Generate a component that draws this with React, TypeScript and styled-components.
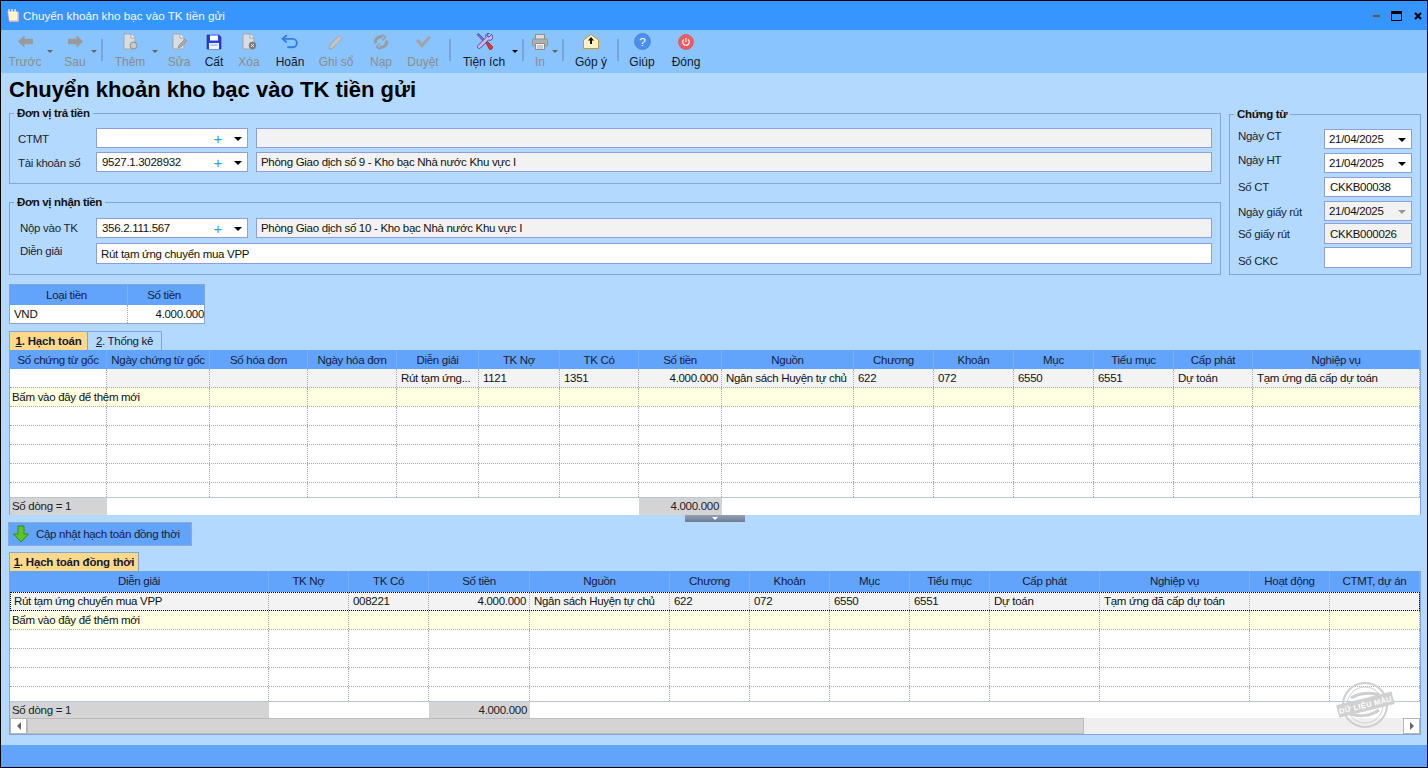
import React from "react";
import styled, { createGlobalStyle } from "styled-components";

const GlobalStyle = createGlobalStyle`
  html, body { margin: 0; padding: 0; overflow: hidden; }
  * { box-sizing: border-box; }
  body {
    font-family: "Liberation Sans", Arial, sans-serif;
    font-size: 11.5px;
    letter-spacing: -0.3px;
    color: #111;
  }
`;

const Windowed = styled.div`
  width: 1428px;
  height: 768px;
  display: flex;
  flex-direction: column;
  background: #b4d9ff;
  border: 1px solid #000;
`;

const TitleBar = styled.div`
  height: 29px;
  flex: none;
  display: flex;
  align-items: center;
  background: #3795ff;
  padding-left: 5px;
  color: #f2f8ff;
  font-size: 11.7px;
  letter-spacing: 0;
`;

const TitleText = styled.span`
  margin-left: 3px;
`;

const WindowButtons = styled.div`
  margin-left: auto;
  display: flex;
  align-items: center;
  padding-right: 5px;
`;

const WinMin = styled.div`
  width: 7px;
  height: 2px;
  background: #5a5a5a;
  margin-right: 11px;
`;

const WinMax = styled.div`
  width: 11px;
  height: 10px;
  border: 1px solid #000;
  border-top-width: 3px;
  margin-right: 12px;
`;

const Toolbar = styled.div`
  height: 43px;
  flex: none;
  display: flex;
  align-items: stretch;
  background: #8ac4ff;
  padding-left: 3px;
  letter-spacing: 0;
`;

const ToolButton = styled.div<{ $w: number; $ml?: number; $off?: boolean }>`
  width: ${(p) => p.$w}px;
  margin-left: ${(p) => p.$ml ?? 0}px;
  flex: none;
  display: flex;
  flex-direction: column;
  align-items: center;
  padding-top: 3px;
  color: ${(p) => (p.$off ? "#8c8c8c" : "#14182c")};
  white-space: nowrap;
`;

const ToolIcon = styled.div`
  height: 17px;
  display: flex;
  align-items: center;
  justify-content: center;
`;

const ToolLabel = styled.div`
  margin-top: 5px;
  line-height: 15px;
  font-size: 12px;
`;

const DropArrow = styled.div<{ $ml: number; $off?: boolean }>`
  flex: none;
  width: 0;
  height: 0;
  margin-left: ${(p) => p.$ml}px;
  margin-top: 20px;
  border-left: 3px solid transparent;
  border-right: 3px solid transparent;
  border-top: 3px solid ${(p) => (p.$off ? "#666" : "#000")};
`;

const ToolSep = styled.div<{ $ml: number }>`
  flex: none;
  width: 2px;
  height: 22px;
  margin: 9px 0 0 ${(p) => p.$ml}px;
  background: #7aa5d8;
`;

const Content = styled.div`
  flex: 1;
  min-height: 0;
  padding: 0 6px 0 8px;
  display: flex;
  flex-direction: column;
`;

const Heading = styled.h1`
  height: 40px;
  flex: none;
  margin: 0;
  padding-top: 1px;
  font-size: 22px;
  line-height: 32px;
  font-weight: bold;
  letter-spacing: 0;
  color: #000;
`;

const FormRow = styled.div`
  display: flex;
  gap: 8px;
  flex: none;
`;

const LeftForms = styled.div`
  width: 1212px;
  flex: none;
  display: flex;
  flex-direction: column;
  gap: 18px;
`;

const Group = styled.div<{ $h: number }>`
  position: relative;
  height: ${(p) => p.$h}px;
  border: 1px solid #86a5d6;
`;

const GroupTitle = styled.div`
  position: absolute;
  top: -8px;
  left: 4px;
  padding: 0 3px;
  background: #b4d9ff;
  font-weight: bold;
  font-size: 11.5px;
  line-height: 14px;
  letter-spacing: -0.35px;
`;

const FormLine = styled.div<{ $top: number; $left: number }>`
  display: flex;
  align-items: center;
  margin-top: ${(p) => p.$top}px;
  padding-left: ${(p) => p.$left}px;
`;

const FormLabel = styled.div<{ $w: number; $dy?: number }>`
  width: ${(p) => p.$w}px;
  flex: none;
  margin-top: ${(p) => (p.$dy ?? 0) * 2}px;
  color: #1a1f33;
`;

const Input = styled.div<{ $w?: number; $h: number; $off?: boolean; $pl?: number }>`
  width: ${(p) => (p.$w ? `${p.$w}px` : "auto")};
  flex: ${(p) => (p.$w ? "none" : "1")};
  height: ${(p) => p.$h}px;
  display: flex;
  align-items: center;
  padding-top: 2px;
  padding-left: ${(p) => p.$pl ?? 4}px;
  background: ${(p) => (p.$off ? "#f2f2f2" : "#fff")};
  border: 1px solid #8f9ed8;
  line-height: 1;
  white-space: nowrap;
`;

const Plus = styled.span`
  margin-left: auto;
  margin-top: -2px;
  color: #3b9bf0;
  font-size: 15px;
  line-height: 1;
`;

const ComboArrow = styled.span<{ $off?: boolean }>`
  width: 0;
  height: 0;
  margin: 0 5px 0 ${(p) => (p.$off ? "auto" : "12px")};
  border-left: 4px solid transparent;
  border-right: 4px solid transparent;
  border-top: 4px solid ${(p) => (p.$off ? "#999" : "#000")};
`;

const DateArrow = styled(ComboArrow)`
  margin-left: auto;
`;

const VoucherGroup = styled(Group)`
  width: 192px;
  flex: none;
  margin-top: 1px;
  padding: 14px 8px 0 8px;
`;

const VoucherLine = styled.div<{ $h: number; $mt: number }>`
  display: flex;
  align-items: center;
  height: ${(p) => p.$h}px;
  margin-top: ${(p) => p.$mt}px;
`;

const MoneyTable = styled.div`
  width: 196px;
  height: 40px;
  flex: none;
  margin-top: 9px;
  border: 1px solid #86a5d6;
  background: #fff;
`;

const MoneyRow = styled.div<{ $head?: boolean }>`
  display: grid;
  grid-template-columns: 118px 76px;
  height: ${(p) => (p.$head ? 20 : 18)}px;
  line-height: ${(p) => (p.$head ? 20 : 18)}px;
  background: ${(p) => (p.$head ? "#62a4fb" : "#fff")};
`;

const MoneyCell = styled.div<{ $head?: boolean; $right?: boolean }>`
  text-align: ${(p) => (p.$head ? "center" : p.$right ? "right" : "left")};
  padding: 0 ${(p) => (p.$right ? 0 : 4)}px 0 ${(p) => (p.$head ? 0 : 4)}px;
  color: ${(p) => (p.$head ? "#14203f" : "#111")};
  border-right: ${(p) => (p.$head ? "1px solid #7fb0f0" : "1px dotted #aaa")};
  &:last-child { border-right: none; }
`;

const Tabs = styled.div<{ $mt: number }>`
  display: flex;
  flex: none;
  height: 19px;
  margin-top: ${(p) => p.$mt}px;
`;

const Tab = styled.div<{ $active?: boolean; $w: number }>`
  width: ${(p) => p.$w}px;
  line-height: 18px;
  text-align: center;
  white-space: nowrap;
  font-weight: ${(p) => (p.$active ? "bold" : "normal")};
  letter-spacing: ${(p) => (p.$active ? "-0.2px" : "-0.3px")};
  background: ${(p) => (p.$active ? "#ffd98a" : "#b4d9ff")};
  border: 1px solid #86a5d6;
  border-bottom: none;
  border-left-width: ${(p) => (p.$active ? 1 : 0)}px;
  color: #141a30;
`;

const GridBox = styled.div<{ $h: number }>`
  position: relative;
  height: ${(p) => p.$h}px;
  flex: none;
  display: flex;
  flex-direction: column;
  background: #fff;
  border-left: 1px solid #86a5d6;
  border-right: 1px solid #86a5d6;
`;

const GridHead = styled.div<{ $cols: string; $h: number }>`
  display: grid;
  grid-template-columns: ${(p) => p.$cols};
  height: ${(p) => p.$h}px;
  flex: none;
  background: #62a4fb;
`;

const HeadCell = styled.div`
  text-align: center;
  line-height: 20px;
  white-space: nowrap;
  overflow: hidden;
  color: #14203f;
  border-right: 1px solid #78adf2;
`;

const GridBody = styled.div`
  flex: 1;
  min-height: 0;
  overflow: hidden;
`;

const Row = styled.div<{ $cols: string; $kind?: "new" | "data" | "focus" }>`
  display: grid;
  grid-template-columns: ${(p) => p.$cols};
  height: 19px;
  line-height: 18px;
  border-bottom: 1px dotted #aaa;
  background: ${(p) =>
    p.$kind === "new" ? "#ffffe1" : p.$kind ? "#f3f3f3" : "#fff"};
  outline: ${(p) => (p.$kind === "focus" ? "1px dotted #000" : "none")};
  outline-offset: -1px;
`;

const Cell = styled.div<{ $right?: boolean; $white?: boolean; $pad?: number; $spill?: boolean }>`
  padding: 0 ${(p) => (p.$right ? 3 : 2)}px 0 ${(p) => p.$pad ?? 4}px;
  text-align: ${(p) => (p.$right ? "right" : "left")};
  white-space: nowrap;
  overflow: ${(p) => (p.$spill ? "visible" : "hidden")};
  border-right: 1px dotted #aaa;
  background: ${(p) => (p.$white ? "#fff" : "transparent")};
  color: #111;
`;

const SumRow = styled.div<{ $cols: string; $h: number }>`
  display: grid;
  grid-template-columns: ${(p) => p.$cols};
  height: ${(p) => p.$h}px;
  line-height: ${(p) => p.$h - 1}px;
  flex: none;
  border-top: 1px solid #b9c6d6;
  border-bottom: 1px solid #a8bad2;
`;

const SumCell = styled.div<{ $gray?: boolean; $right?: boolean }>`
  background: ${(p) => (p.$gray ? "#d4d4d4" : "#fff")};
  text-align: ${(p) => (p.$right ? "right" : "left")};
  padding: 0 3px 0 2px;
  color: #222;
`;

const Splitter = styled.div`
  height: 7px;
  flex: none;
  display: flex;
  justify-content: center;
  padding-right: 1px;
`;

const SplitGrip = styled.div`
  width: 60px;
  height: 8px;
  margin-top: -1px;
  display: flex;
  justify-content: center;
  align-items: center;
  background: linear-gradient(#9aa6bb, #6f7a90);
  &::after {
    content: "";
    border-left: 3px solid transparent;
    border-right: 3px solid transparent;
    border-top: 3px solid #fff;
  }
`;

const UpdateButton = styled.div`
  width: 184px;
  height: 24px;
  flex: none;
  margin-left: -1px;
  display: flex;
  align-items: center;
  padding-left: 3px;
  gap: 6px;
  white-space: nowrap;
  background: #62a4fb;
  border: 1px solid #8aa9d4;
  color: #14203f;
`;

const ScrollFrame = styled.div`
  flex: none;
  border: 1px solid #86a5d6;
  border-top: none;
`;

const ScrollBar = styled.div`
  height: 16px;
  display: flex;
  background: #efefef;
`;

const ScrollEnd = styled.div<{ $left?: boolean }>`
  width: 17px;
  display: flex;
  align-items: center;
  justify-content: center;
  background: #fff;
  border: 1px solid #b5b5b5;
  &::after {
    content: "";
    border-top: 4px solid transparent;
    border-bottom: 4px solid transparent;
    ${(p) =>
      p.$left ? "border-right: 4px solid #666;" : "border-left: 4px solid #666;"}
  }
`;

const ScrollThumb = styled.div`
  width: 1057px;
  background: #d4d4d4;
  border: 1px solid #bcbcbc;
`;

const ScrollTrack = styled.div`
  flex: 1;
`;

const Stamp = styled.svg`
  position: absolute;
  right: 21px;
  bottom: -11px;
  z-index: 1;
  pointer-events: none;
`;

const Footer = styled.div`
  height: 22px;
  flex: none;
  background: #62a4fb;
`;

const Spacer = styled.div`
  width: 8px;
  flex: none;
`;

/* toolbar drawings */
const ArrowLeft = () => (
  <svg width="17" height="15" viewBox="0 0 18 15">
    <path d="M1 7.500 8 1v3.500h9v6H8V14z" fill="#9a9a9a" />
  </svg>
);
const ArrowRight = () => (
  <svg width="17" height="15" viewBox="0 0 18 15">
    <path d="M17 7.500 10 1v3.500H1v6h9V14z" fill="#9a9a9a" />
  </svg>
);
const DocBase = ({ children }: { children?: React.ReactNode }) => (
  <svg width="16" height="17" viewBox="0 0 16 17">
    <path d="M2 1h7l4 4v11H2z" fill="#d8dde4" stroke="#a5a5a5" />
    <path d="M9 1v4h4" fill="#fff" stroke="#a5a5a5" />
    {children}
  </svg>
);
const DocAdd = () => (
  <DocBase>
    <circle cx="11.500" cy="12.500" r="3.500" fill="#c9c9c9" stroke="#8f8f8f" />
  </DocBase>
);
const DocEdit = () => (
  <DocBase>
    <path d="m7 15 1-3 6-6 2 2-6 6z" fill="#a8a8a8" stroke="#8b8b8b" strokeWidth=".6" />
  </DocBase>
);
const DocDel = () => (
  <DocBase>
    <circle cx="11.500" cy="12.500" r="3.700" fill="#7b7b7b" />
    <path d="m10 11 3 3m0-3-3 3" stroke="#eee" />
  </DocBase>
);
const Floppy = () => (
  <svg width="16" height="16" viewBox="0 0 16 16">
    <path d="M1 1h12l2 2v12H1z" fill="#2a3fd6" stroke="#1a2a9c" strokeWidth=".6" />
    <rect x="4" y="1.500" width="8" height="5" fill="#fff" />
    <rect x="3" y="9" width="10" height="6" fill="#eef2ff" />
    <rect x="4.500" y="10.500" width="7" height="1" fill="#8c9ae0" />
  </svg>
);
const Undo = () => (
  <svg width="18" height="15" viewBox="0 0 17 14" fill="none" stroke="#2f7fe0" strokeWidth="1.800">
    <path d="M5.500 1 1.500 4.500l4 3.500" />
    <path d="M2 4.500h9a4 4 0 0 1 0 8H6" />
  </svg>
);
const Pencil = () => (
  <svg width="16" height="16" viewBox="0 0 16 16">
    <path d="m1 15 1-4 9-9.500 3 3L5 14z" fill="#c4c4c4" stroke="#a3a3a3" />
  </svg>
);
const Reload = () => (
  <svg width="16" height="16" viewBox="0 0 16 16" fill="none" stroke="#9b9b9b" strokeWidth="3">
    <path d="M2.500 9.500A5.500 5.500 0 0 1 9.500 3" />
    <path d="M13.500 6.500A5.500 5.500 0 0 1 6.500 13" />
    <path d="m8.500 .5 4 2.500-3 3.500M7.500 15.500 3.500 13l3-3.500" strokeWidth="1.400" />
  </svg>
);
const Check = () => (
  <svg width="17" height="14" viewBox="0 0 17 14">
    <path d="M1 6 3.500 4 7 8l7-7 2 1.500L7 13z" fill="#a3a3a3" />
  </svg>
);
const Tools = () => (
  <svg width="17" height="17" viewBox="0 0 17 17">
    <path d="m1 1.500 1.500-1L9 7l-1.500 1.500z" fill="#7a6fd8" stroke="#3f2f86" strokeWidth=".6" />
    <path d="M15.500 1.500 13 4l-1.500-.5L11 2l2.500-2C11 -.5 9 2 10 4.500L2 12.500c-1.500 2 1 4 2.500 2.500l8-8c2.500 1 5-1 4-4z" fill="#c9b9ee" stroke="#43307f" strokeWidth=".8" />
    <path d="m10 10 1.500-1.500 5 5c.5 2-1 3.500-3 3z" fill="#e0343c" stroke="#7c1a24" strokeWidth=".6" />
  </svg>
);
const Printer = () => (
  <svg width="16" height="16" viewBox="0 0 16 16">
    <rect x="3.500" y=".5" width="9" height="5" fill="#dedede" stroke="#8e8e8e" />
    <rect x=".5" y="5" width="15" height="7" rx="1.500" fill="#b0b0b0" stroke="#8e8e8e" />
    <rect x="3.500" y="9.500" width="9" height="6" fill="#f1f1f1" stroke="#8e8e8e" />
    <path d="M5 12h6M5 14h6" stroke="#a8a8a8" />
  </svg>
);
const Mail = () => (
  <svg width="16" height="15" viewBox="0 0 16 15">
    <path d="M.5 6 8 .5 15.500 6v8.500H.5z" fill="#fff3c4" stroke="#c39a3a" />
    <path d="M8 3 11 6.500H9V10H7V6.500H5z" fill="#111" />
  </svg>
);
const Help = () => (
  <svg width="17" height="17" viewBox="0 0 16 16">
    <circle cx="8" cy="8" r="7.500" fill="#4a8ff0" stroke="#3a74cc" strokeWidth=".6" />
    <text x="8" y="12" textAnchor="middle" fontSize="11" fill="#fff" fontFamily="Liberation Sans, sans-serif">?</text>
  </svg>
);
const Power = () => (
  <svg width="16" height="16" viewBox="0 0 16 16">
    <circle cx="8" cy="8" r="7.500" fill="#f05a60" stroke="#d34a50" strokeWidth=".6" />
    <path d="M5.800 5.500a3.300 3.300 0 1 0 4.400 0M8 4v4" fill="none" stroke="#fff" strokeWidth="1.100" />
  </svg>
);
const DownGreen = () => (
  <svg width="18" height="18" viewBox="0 0 18 18">
    <path d="M6 1h6v8h4.500L9 17 1.500 9H6z" fill="#5fc41f" stroke="#2f8f12" />
  </svg>
);
const AppIcon = () => (
  <svg width="14" height="15" viewBox="0 0 14 15">
    <path d="M1 3h10l2 1v10H3z" fill="#d9d0f0" stroke="#8a7fb0" strokeWidth=".7" />
    <rect x="3" y="4" width="8" height="8" fill="#fff7c9" />
    <path d="M3 1v4M6 1v4M9 1v4" stroke="#fff" strokeWidth="1.200" />
  </svg>
);
const CloseX = () => (
  <svg width="8" height="8" viewBox="0 0 8 8">
    <path d="m1 1 6 6m0-6-6 6" stroke="#000" strokeWidth="2" />
  </svg>
);

const gridOneCols = "97px 103px 98px 89px 82px 81px 79px 83px 132px 80px 80px 80px 80px 79px 167px";
const gridOneHead = ["Số chứng từ gốc", "Ngày chứng từ gốc", "Số hóa đơn", "Ngày hóa đơn", "Diễn giải", "TK Nợ", "TK Có", "Số tiền", "Nguồn", "Chương", "Khoản", "Mục", "Tiểu mục", "Cấp phát", "Nghiệp vụ"];
const gridOneData = ["", "", "", "", "Rút tạm ứng...", "1121", "1351", "4.000.000", "Ngân sách Huyện tự chủ", "622", "072", "6550", "6551", "Dự toán", "Tạm ứng đã cấp dự toán"];

const gridTwoCols = "259px 80px 80px 101px 140px 80px 80px 80px 80px 110px 150px 80px 90px";
const gridTwoHead = ["Diễn giải", "TK Nợ", "TK Có", "Số tiền", "Nguồn", "Chương", "Khoản", "Mục", "Tiểu mục", "Cấp phát", "Nghiệp vụ", "Hoạt động", "CTMT, dự án"];
const gridTwoData = ["Rút tạm ứng chuyển mua VPP", "", "008221", "4.000.000", "Ngân sách Huyện tự chủ", "622", "072", "6550", "6551", "Dự toán", "Tạm ứng đã cấp dự toán", "", ""];

const NEW_ROW = "Bấm vào đây để thêm mới";

interface GridProps {
  cols: string;
  head: string[];
  data: string[];
  money: number;
  headH: number;
  height: number;
  sumCols: string;
  sumH: number;
  focusRow?: boolean;
  firstWhite?: boolean;
  empties: number;
  children?: React.ReactNode;
}

const DataGrid: React.FC<GridProps> = ({ cols, head, data, money, headH, height, sumCols, sumH, focusRow, firstWhite, empties, children }) => (
  <GridBox $h={height}>
    <GridHead $cols={cols} $h={headH}>
      {head.map((h) => (
        <HeadCell key={h}>{h}</HeadCell>
      ))}
    </GridHead>
    <GridBody>
      <Row $cols={cols} $kind={focusRow ? "focus" : "data"}>
        {data.map((d, i) => (
          <Cell key={i} $right={i === money} $white={firstWhite && i === 0}>{d}</Cell>
        ))}
      </Row>
      <Row $cols={cols} $kind="new">
        {head.map((h, i) => (
          <Cell key={h} $pad={2} $spill={i === 0}>{i === 0 ? NEW_ROW : ""}</Cell>
        ))}
      </Row>
      {Array.from({ length: empties }).map((_, r) => (
        <Row key={r} $cols={cols}>
          {head.map((h) => (
            <Cell key={h} />
          ))}
        </Row>
      ))}
    </GridBody>
    <SumRow $cols={sumCols} $h={sumH}>
      <SumCell $gray>Số dòng = 1</SumCell>
      <SumCell />
      <SumCell $gray $right>4.000.000</SumCell>
      <SumCell />
    </SumRow>
    {children}
  </GridBox>
);

export default function App() {
  return (
    <Windowed>
      <GlobalStyle />
      <TitleBar>
        <AppIcon />
        <TitleText>Chuyển khoản kho bạc vào TK tiền gửi</TitleText>
        <WindowButtons>
          <WinMin />
          <WinMax />
          <CloseX />
        </WindowButtons>
      </TitleBar>

      <Toolbar>
        <ToolButton $w={42} $off><ToolIcon><ArrowLeft /></ToolIcon><ToolLabel>Trước</ToolLabel></ToolButton>
        <DropArrow $ml={1} $off />
        <ToolButton $w={32} $ml={6} $off><ToolIcon><ArrowRight /></ToolIcon><ToolLabel>Sau</ToolLabel></ToolButton>
        <DropArrow $ml={0} $off />
        <ToolSep $ml={4} />
        <ToolButton $w={30} $ml={12} $off><ToolIcon><DocAdd /></ToolIcon><ToolLabel>Thêm</ToolLabel></ToolButton>
        <DropArrow $ml={7} $off />
        <ToolButton $w={24} $ml={9} $off><ToolIcon><DocEdit /></ToolIcon><ToolLabel>Sửa</ToolLabel></ToolButton>
        <ToolButton $w={24} $ml={11}><ToolIcon><Floppy /></ToolIcon><ToolLabel>Cất</ToolLabel></ToolButton>
        <ToolButton $w={24} $ml={11} $off><ToolIcon><DocDel /></ToolIcon><ToolLabel>Xóa</ToolLabel></ToolButton>
        <ToolButton $w={34} $ml={12}><ToolIcon><Undo /></ToolIcon><ToolLabel>Hoãn</ToolLabel></ToolButton>
        <ToolButton $w={38} $ml={10} $off><ToolIcon><Pencil /></ToolIcon><ToolLabel>Ghi sổ</ToolLabel></ToolButton>
        <ToolButton $w={30} $ml={11} $off><ToolIcon><Reload /></ToolIcon><ToolLabel>Nạp</ToolLabel></ToolButton>
        <ToolButton $w={34} $ml={10} $off><ToolIcon><Check /></ToolIcon><ToolLabel>Duyệt</ToolLabel></ToolButton>
        <ToolSep $ml={9} />
        <ToolButton $w={44} $ml={11}><ToolIcon><Tools /></ToolIcon><ToolLabel>Tiện ích</ToolLabel></ToolButton>
        <DropArrow $ml={6} />
        <ToolSep $ml={4} />
        <ToolButton $w={20} $ml={6} $off><ToolIcon><Printer /></ToolIcon><ToolLabel>In</ToolLabel></ToolButton>
        <DropArrow $ml={2} $off />
        <ToolSep $ml={4} />
        <ToolButton $w={36} $ml={9}><ToolIcon><Mail /></ToolIcon><ToolLabel>Góp ý</ToolLabel></ToolButton>
        <ToolSep $ml={8} />
        <ToolButton $w={32} $ml={7}><ToolIcon><Help /></ToolIcon><ToolLabel>Giúp</ToolLabel></ToolButton>
        <ToolButton $w={36} $ml={10}><ToolIcon><Power /></ToolIcon><ToolLabel>Đóng</ToolLabel></ToolButton>
      </Toolbar>

      <Content>
        <Heading>Chuyển khoản kho bạc vào TK tiền gửi</Heading>

        <FormRow>
          <LeftForms>
            <Group $h={71}>
              <GroupTitle>Đơn vị trả tiền</GroupTitle>
              <FormLine $top={14} $left={8}>
                <FormLabel $w={78} $dy={1}>CTMT</FormLabel>
                <Input $w={152} $h={20}><Plus>+</Plus><ComboArrow /></Input>
                <Spacer />
                <Input $h={20} $off />
                <Spacer />
              </FormLine>
              <FormLine $top={4} $left={8}>
                <FormLabel $w={78} $dy={1}>Tài khoản số</FormLabel>
                <Input $w={152} $h={20} $pl={5}>9527.1.3028932<Plus>+</Plus><ComboArrow /></Input>
                <Spacer />
                <Input $h={20} $off>Phòng Giao dịch số 9 - Kho bạc Nhà nước Khu vực I</Input>
                <Spacer />
              </FormLine>
            </Group>
            <Group $h={73}>
              <GroupTitle>Đơn vị nhận tiền</GroupTitle>
              <FormLine $top={15} $left={10}>
                <FormLabel $w={76}>Nộp vào TK</FormLabel>
                <Input $w={152} $h={20} $pl={5}>356.2.111.567<Plus>+</Plus><ComboArrow /></Input>
                <Spacer />
                <Input $h={20} $off>Phòng Giao dịch số 10 - Kho bạc Nhà nước Khu vực I</Input>
                <Spacer />
              </FormLine>
              <FormLine $top={5} $left={10}>
                <FormLabel $w={76} $dy={-3}>Diễn giải</FormLabel>
                <Input $h={21}>Rút tạm ứng chuyển mua VPP</Input>
                <Spacer />
              </FormLine>
            </Group>
          </LeftForms>

          <VoucherGroup $h={161}>
            <GroupTitle>Chứng từ</GroupTitle>
            <VoucherLine $h={20} $mt={0}>
              <FormLabel $w={86} $dy={-3}>Ngày CT</FormLabel>
              <Input $w={88} $h={20}>21/04/2025<DateArrow /></Input>
            </VoucherLine>
            <VoucherLine $h={20} $mt={4}>
              <FormLabel $w={86} $dy={-3}>Ngày HT</FormLabel>
              <Input $w={88} $h={20}>21/04/2025<DateArrow /></Input>
            </VoucherLine>
            <VoucherLine $h={20} $mt={4}>
              <FormLabel $w={86}>Số CT</FormLabel>
              <Input $w={88} $h={20} $pl={5}>CKKB00038</Input>
            </VoucherLine>
            <VoucherLine $h={20} $mt={4}>
              <FormLabel $w={86} $dy={1}>Ngày giấy rút</FormLabel>
              <Input $w={88} $h={20} $off>21/04/2025<ComboArrow $off /></Input>
            </VoucherLine>
            <VoucherLine $h={21} $mt={2}>
              <FormLabel $w={86}>Số giấy rút</FormLabel>
              <Input $w={88} $h={21} $off $pl={5}>CKKB000026</Input>
            </VoucherLine>
            <VoucherLine $h={21} $mt={3}>
              <FormLabel $w={86} $dy={3}>Số CKC</FormLabel>
              <Input $w={88} $h={21} />
            </VoucherLine>
          </VoucherGroup>
        </FormRow>

        <MoneyTable>
          <MoneyRow $head>
            <MoneyCell $head>Loại tiền</MoneyCell>
            <MoneyCell $head>Số tiền</MoneyCell>
          </MoneyRow>
          <MoneyRow>
            <MoneyCell>VND</MoneyCell>
            <MoneyCell $right>4.000.000</MoneyCell>
          </MoneyRow>
        </MoneyTable>

        <Tabs $mt={7}>
          <Tab $active $w={79}><u>1</u>. Hạch toán</Tab>
          <Tab $w={74}><u>2</u>. Thống kê</Tab>
        </Tabs>
        <DataGrid
          cols={gridOneCols}
          head={gridOneHead}
          data={gridOneData}
          money={7}
          headH={19}
          height={165}
          sumCols="97px 532px 83px 1fr"
          sumH={18}
          firstWhite
          empties={5}
        />
        <Splitter><SplitGrip /></Splitter>

        <UpdateButton><DownGreen />Cập nhật hạch toán đồng thời</UpdateButton>

        <Tabs $mt={6}>
          <Tab $active $w={130}><u>1</u>. Hạch toán đồng thời</Tab>
        </Tabs>
        <DataGrid
          cols={gridTwoCols}
          head={gridTwoHead}
          data={gridTwoData}
          money={3}
          headH={21}
          height={147}
          sumCols="259px 160px 101px 1fr"
          sumH={17}
          focusRow
          empties={4}
        >
          <Stamp width="66" height="48" viewBox="0 0 66 48">
            <g fill="none" stroke="#cfcfcf">
              <circle cx="32" cy="24" r="22" strokeWidth="2" />
              <circle cx="32" cy="24" r="18" />
              <path d="M18 17c8-5 20-6 28-3M18 33c8 3 20 2 28-4" strokeWidth="3" />
            </g>
            <g transform="rotate(-14 33 24)">
              <rect x="4" y="17" width="57" height="13" fill="#d0d0d0" />
              <text x="32.500" y="26.500" textAnchor="middle" fontSize="7.500" fontWeight="bold" letterSpacing=".4" fill="#fff" fontFamily="Liberation Sans, sans-serif">DỮ LIỆU MÀU</text>
            </g>
          </Stamp>
        </DataGrid>
        <ScrollFrame>
          <ScrollBar>
            <ScrollEnd $left />
            <ScrollThumb />
            <ScrollTrack />
            <ScrollEnd />
          </ScrollBar>
        </ScrollFrame>
      </Content>
      <Footer />
    </Windowed>
  );
}
